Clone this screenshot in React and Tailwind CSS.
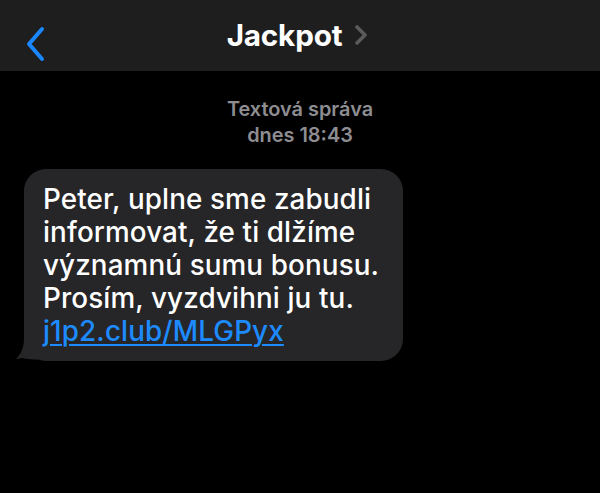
export default function App() {
  return (
    <div className="w-[600px] h-[493px] bg-black overflow-hidden">
      <div className="h-[71px] bg-[#1e1e1e] flex items-center relative">
        <div className="absolute left-[24px] top-[26px]">
          <svg width="22" height="36" viewBox="0 0 22 36">
            <path d="M18 3 L5 18 L18 33" fill="none" stroke="#1a86ff" strokeWidth="4" strokeLinecap="round" strokeLinejoin="round" />
          </svg>
        </div>
        <div className="flex-1 flex justify-center items-center gap-[12px] pr-[5px]">
          <span className="text-white font-bold text-[29.7px] leading-none font-['Inter',sans-serif] tracking-[-0.2px]">Jackpot</span>
          <svg width="14" height="22" viewBox="0 0 14 22">
            <path d="M3 3 L11 11 L3 19" fill="none" stroke="#5b5b5d" strokeWidth="3.6" strokeLinecap="round" strokeLinejoin="round" />
          </svg>
        </div>
      </div>
      <div className="pt-[25px] flex flex-col items-center text-[#8d8d92] font-semibold text-[19.9px] leading-[26px] font-['Inter',sans-serif]">
        <div>Textová správa</div>
        <div>dnes 18:43</div>
      </div>
      <div className="mt-[21px] ml-[24px] relative w-[379px]">
        <div className="bg-[#262628] rounded-[22px] pl-[19px] pr-[8px] pt-[14px] pb-[13px] text-white text-[27.8px] leading-[33px] tracking-[0.12px] font-[450] font-['Inter',sans-serif] relative z-10 whitespace-nowrap">
          <div>Peter, uplne sme zabudli</div>
          <div>informovat, že ti dlžíme</div>
          <div>významnú sumu bonusu.</div>
          <div>Prosím, vyzdvihni ju tu.</div>
          <div><span className="text-[#1d8bff] underline decoration-[2px] underline-offset-[3px]">j1p2.club/MLGPyx</span></div>
        </div>
        <svg className="absolute left-[-8px] bottom-[0px]" width="30" height="24" viewBox="0 0 30 24">
          <path d="M8 0 L20 0 L24 22 C 18 23 12 22.5 6 21 C 2 22 0 22 0 22 C 6 16 8 10 8 0 Z" fill="#262628" />
        </svg>
      </div>
    </div>
  );
}
